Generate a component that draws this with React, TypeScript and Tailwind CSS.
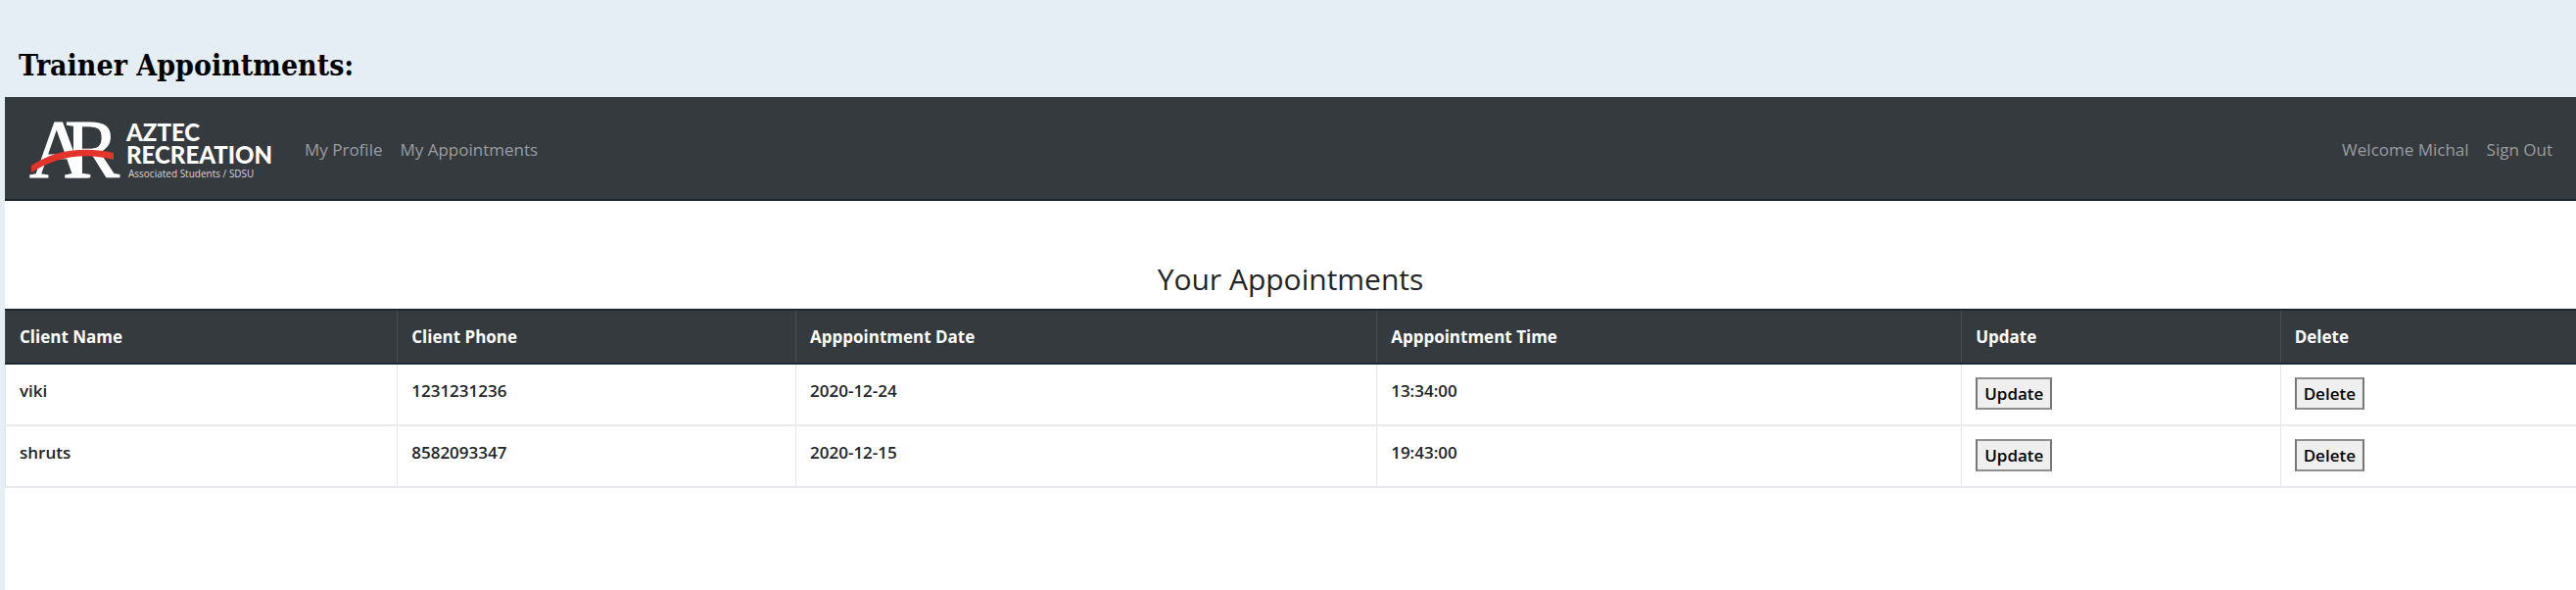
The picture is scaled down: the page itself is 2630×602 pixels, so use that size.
const appointments = [
  { name: "viki", phone: "1231231236", date: "2020-12-24", time: "13:34:00" },
  { name: "shruts", phone: "8582093347", date: "2020-12-15", time: "19:43:00" },
];

const columns = [
  { label: "Client Name", width: "w-[15.25%]" },
  { label: "Client Phone", width: "w-[15.5%]" },
  { label: "Apppointment Date", width: "w-[22.6%]" },
  { label: "Apppointment Time", width: "w-[22.75%]" },
  { label: "Update", width: "w-[12.4%]" },
  { label: "Delete", width: "w-[11.5%]" },
];

function Logo() {
  return (
    <svg
      width="254"
      height="64"
      viewBox="0 0 254 64"
      className="overflow-visible"
      role="img"
      aria-label="Aztec Recreation"
    >
      <g fill="#fff" stroke="#fff" strokeWidth="1" fontFamily="'Liberation Serif', serif" fontSize="84">
        <text x="1" y="62">A</text>
        <text x="37" y="62">R</text>
      </g>
      <path d="M3 50 C26 34 56 30 87 37 L87 44 C56 36 28 41 3 57 Z" fill="#e3342b" />
      <g fill="#fff" fontFamily="Lato, sans-serif" fontWeight="900" fontSize="24">
        <text x="100" y="25">AZTEC</text>
        <text x="100" y="48">RECREATION</text>
      </g>
      <text x="102" y="62" fill="#d5d7d9" fontFamily="'Open Sans', sans-serif" fontSize="10">
        Associated Students / SDSU
      </text>
    </svg>
  );
}

function CellButton({ children }: { children: string }) {
  return (
    <button
      type="button"
      className="block h-[33px] border-2 border-[#8f8f8f] border-x-[#777] bg-[#efefef] px-[7px] text-[17px] leading-7 font-semibold text-black"
    >
      {children}
    </button>
  );
}

export default function App() {
  return (
    <div className="flex min-h-screen flex-col bg-[#e5edf5] pl-[5px] font-['Open_Sans',sans-serif] text-[#212529]">
      <h1 className="px-[14px] pt-[47px] pb-3 font-['DejaVu_Serif_Condensed','DejaVu_Serif',serif] text-[30px] leading-10 font-bold text-black">
        Trainer Appointments:
      </h1>
      <main className="flex-1 bg-white">
        <nav className="flex h-[106px] items-center border-b-2 border-[#18222d] bg-[#353a3f] px-6 text-[17px] text-[#9a9da0]">
          <a href="#home" className="mr-7">
            <Logo />
          </a>
          <div className="flex gap-[18px] pt-1">
            <a href="#profile">My Profile</a>
            <a href="#appointments">My Appointments</a>
          </div>
          <div className="ml-auto flex gap-[18px] pt-1">
            <span>Welcome Michal</span>
            <a href="#signout">Sign Out</a>
          </div>
        </nav>
        <h2 className="pt-[60px] pb-[10px] text-center text-[30px] leading-10">Your Appointments</h2>
        <table className="w-full table-fixed border-collapse text-left text-[17px] leading-6">
          <thead>
            <tr className="h-[55px] border-y-2 border-[#1d2932] bg-[#353a3f] text-white">
              {columns.map((c) => (
                <th key={c.label} scope="col" className={`${c.width} border-l border-l-[#454d55] px-[14px] font-bold`}>
                  {c.label}
                </th>
              ))}
            </tr>
          </thead>
          <tbody className="font-semibold">
            {appointments.map((a) => (
              <tr key={a.name} className="h-[63px] border-b-2 border-[#e9ebee] align-top">
                <td className="border-l border-l-[#e3e6ea] px-[14px] pt-[15px]">{a.name}</td>
                <td className="border-l border-l-[#e3e6ea] px-[14px] pt-[15px]">{a.phone}</td>
                <td className="border-l border-l-[#e3e6ea] px-[14px] pt-[15px]">{a.date}</td>
                <td className="border-l border-l-[#e3e6ea] px-[14px] pt-[15px]">{a.time}</td>
                <td className="border-l border-l-[#e3e6ea] px-[14px] pt-[13px]">
                  <CellButton>Update</CellButton>
                </td>
                <td className="border-l border-l-[#e3e6ea] px-[14px] pt-[13px]">
                  <CellButton>Delete</CellButton>
                </td>
              </tr>
            ))}
          </tbody>
        </table>
      </main>
    </div>
  );
}
